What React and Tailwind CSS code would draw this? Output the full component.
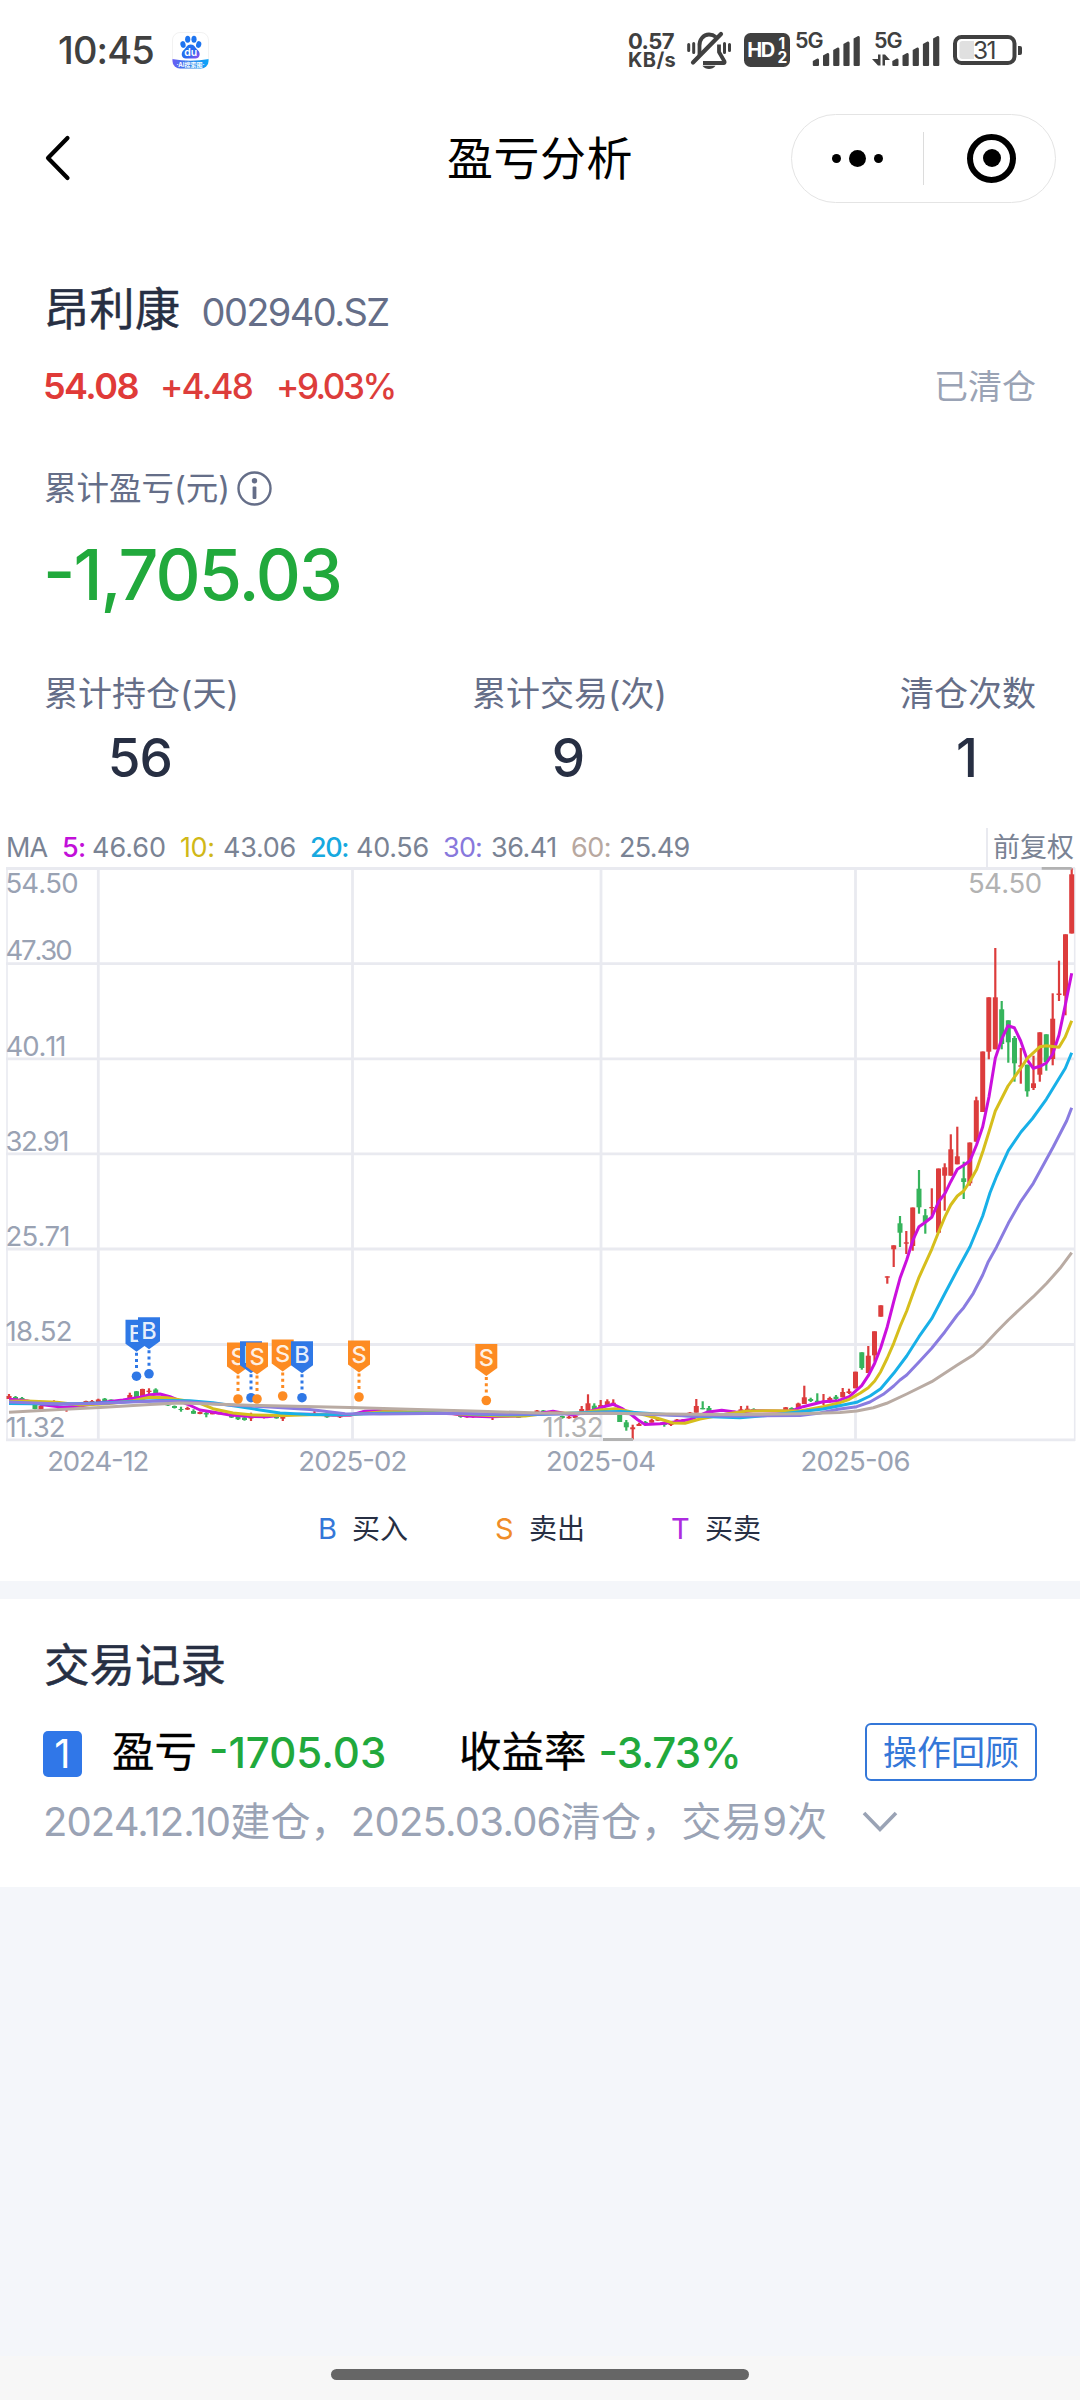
import React from "react";

const GRID_Y = [868.5, 963.7, 1058.8, 1153.8, 1249, 1344.5, 1439.8];
const GRID_X = [98.3, 352.5, 601, 855.5];

const PRICE_LABELS = [
  ["54.50", 893, 73],
  ["47.30", 960, 67],
  ["40.11", 1055.5, 61],
  ["32.91", 1150.5, 64],
  ["25.71", 1245.5, 65],
  ["18.52", 1341, 67],
  ["11.32", 1436.7, 60],
];

const DATE_LABELS = [
  ["2024", "12", 98.3, 102],
  ["2025", "02", 352.8, 109],
  ["2025", "04", 601, 110],
  ["2025", "06", 855.5, 110],
];

// direction, x, high, body top, body bottom, low
const CANDLES = [
  ["r", 9, 1394, 1396, 1399, 1399], ["g", 15.5, 1396, 1397, 1399, 1399], ["g", 22, 1397, 1398, 1400, 1400],
  ["g", 35, 1404.7, 1405, 1409, 1409.3], ["r", 41, 1405, 1406, 1409.3, 1410], ["r", 54, 1400.3, 1401, 1403, 1403],
  ["g", 60, 1406, 1407, 1410, 1411], ["r", 66.5, 1406, 1408, 1410, 1411.7], ["r", 86, 1400.7, 1401, 1403, 1403],
  ["r", 92, 1400, 1401, 1403, 1403], ["r", 98.3, 1398.7, 1399.5, 1402, 1402.7], ["g", 104.7, 1398, 1398.7, 1401, 1401.3],
  ["g", 111, 1399.5, 1399.5, 1401, 1401], ["r", 117, 1400, 1400, 1401.5, 1401.5],
  ["r", 129.8, 1392.7, 1395, 1399.3, 1400], ["g", 136.5, 1391, 1391.3, 1397, 1397], ["r", 142.5, 1388.7, 1389, 1396, 1397],
  ["r", 149, 1388.3, 1390.7, 1392, 1394], ["g", 155.7, 1388.3, 1389.5, 1393.3, 1393.5],
  ["g", 168, 1402, 1403.5, 1405.5, 1406], ["g", 174.5, 1405.5, 1406, 1408, 1408.5], ["g", 181, 1406.7, 1409, 1410, 1411.7],
  ["r", 187.5, 1406.7, 1408, 1409.5, 1410], ["g", 193.5, 1409.3, 1411, 1413.7, 1414], ["r", 200, 1411.5, 1412, 1414, 1414.2],
  ["g", 206.3, 1411.7, 1413, 1414.5, 1417.3], ["r", 212.5, 1412, 1412.7, 1414.3, 1414.3], ["r", 219, 1412, 1412.7, 1414.3, 1414.3],
  ["g", 231.5, 1414, 1415, 1417.5, 1418], ["g", 238, 1416, 1416.5, 1419.3, 1420], ["g", 244.5, 1416.7, 1417.5, 1420, 1420.7],
  ["r", 251, 1412.7, 1416.7, 1418.5, 1421], ["r", 264, 1415, 1416, 1418, 1418.5], ["g", 276.5, 1416.7, 1417, 1418.3, 1418.7],
  ["r", 282.8, 1416.7, 1417, 1418.7, 1421], ["r", 314.5, 1410.7, 1413, 1414, 1414], ["g", 327, 1415, 1415.5, 1417.3, 1417.7],
  ["r", 340, 1415, 1415.5, 1417.3, 1418], ["r", 365, 1410, 1410.5, 1412, 1412], ["r", 371, 1410, 1410.5, 1412, 1412],
  ["g", 460.7, 1413.7, 1415, 1417, 1417.7], ["r", 467, 1415, 1416, 1417.3, 1417.7], ["r", 473, 1415, 1416, 1417.3, 1417.7],
  ["r", 486, 1416, 1416.3, 1418, 1418], ["r", 492.5, 1416.3, 1416.7, 1418, 1420], ["g", 518.5, 1415, 1416, 1417.7, 1418],
  ["r", 524, 1415, 1415.5, 1417, 1417], ["r", 537, 1410, 1410.5, 1412, 1412], ["g", 543.3, 1410, 1410.5, 1412, 1412],
  ["g", 562.3, 1415.7, 1416, 1418, 1418.7], ["r", 569, 1416, 1416.7, 1418.3, 1418.7], ["r", 575.3, 1415.7, 1416, 1418, 1418.3],
  ["r", 581.7, 1406, 1409, 1411.7, 1412], ["r", 588, 1394.3, 1403.3, 1410.7, 1411], ["g", 594.3, 1403.3, 1405.7, 1410, 1410],
  ["r", 600.7, 1400, 1405, 1409.3, 1409.3], ["r", 607.3, 1399.3, 1401.3, 1405.3, 1406], ["r", 613.3, 1399.3, 1402.7, 1405.3, 1406],
  ["g", 619.7, 1414, 1414, 1422, 1422], ["g", 626.3, 1420, 1422.3, 1427.3, 1430.7], ["r", 632.7, 1424.7, 1427.3, 1429.3, 1439.5],
  ["r", 639, 1422.7, 1424, 1426, 1426], ["g", 645.3, 1421, 1422, 1424, 1424], ["r", 651.7, 1418.7, 1420, 1422.7, 1422.7],
  ["r", 658, 1418.3, 1419, 1420.7, 1420.7], ["g", 664.3, 1422, 1423.5, 1425, 1426.7], ["r", 671, 1423, 1423.5, 1425, 1426],
  ["r", 677, 1419, 1419.5, 1421, 1421], ["r", 683.3, 1419, 1419.5, 1421, 1421], ["r", 690, 1412, 1412.5, 1414, 1414],
  ["r", 696.3, 1399, 1406, 1412.7, 1412.7], ["g", 702.7, 1401.3, 1408, 1409.3, 1409.3], ["g", 709, 1406, 1408, 1411.3, 1411.7],
  ["r", 734.3, 1410.7, 1411, 1412, 1412], ["r", 741, 1406, 1409.3, 1412, 1412], ["r", 747.3, 1405.7, 1408.7, 1411.3, 1411.3],
  ["g", 753.7, 1408.3, 1409, 1411, 1411], ["r", 760, 1410, 1410.5, 1412, 1412], ["r", 766.5, 1410, 1410.5, 1412, 1412],
  ["r", 785.7, 1407, 1407.3, 1410.7, 1411], ["g", 791.7, 1407.3, 1408, 1410, 1410], ["r", 798.3, 1402.7, 1403.5, 1408.7, 1408.7],
  ["r", 804.3, 1385.7, 1397.3, 1404, 1404], ["g", 810.7, 1397.7, 1399, 1401, 1402], ["g", 817.3, 1393.3, 1400.7, 1402, 1402.3],
  ["r", 823.5, 1394, 1401, 1402, 1405], ["r", 829.8, 1396.7, 1398, 1401.5, 1402.7], ["g", 836, 1395, 1396.7, 1399, 1400],
  ["r", 842.7, 1388, 1392, 1397.3, 1397.5], ["r", 849, 1388.7, 1391.3, 1393, 1394],
  ["r", 855.5, 1371.7, 1371.7, 1388.3, 1388.3], ["g", 861.8, 1352.3, 1352.3, 1368, 1369.7], ["r", 868.3, 1346, 1355.7, 1373, 1373],
  ["r", 874.5, 1331.3, 1331.3, 1355.3, 1361.7], ["r", 880.8, 1305.3, 1305.3, 1316.7, 1316.7], ["r", 887.3, 1276.3, 1276.3, 1277.7, 1283.7],
  ["r", 893.7, 1245.3, 1245.3, 1249.3, 1267], ["g", 900, 1216, 1223.3, 1232.7, 1247], ["r", 906.3, 1231, 1242.3, 1243.7, 1254],
  ["r", 912.7, 1207.5, 1207.5, 1246, 1250.7], ["g", 919, 1170, 1188.7, 1207.3, 1213.7], ["g", 925.3, 1209, 1215.3, 1222, 1233.7],
  ["r", 931.8, 1188.3, 1207, 1208.3, 1216.7], ["r", 938.5, 1168.5, 1168.5, 1232.7, 1232.7], ["r", 944.7, 1163.3, 1167.3, 1175.7, 1210.7],
  ["r", 950.8, 1134.3, 1149.3, 1175.7, 1175.7], ["r", 957.3, 1126.7, 1156.3, 1164.3, 1164.3], ["g", 963.7, 1161.7, 1178.3, 1182, 1199],
  ["r", 969.8, 1142.5, 1142.5, 1183.3, 1185.7], ["r", 976.3, 1096.7, 1100.3, 1141.7, 1141.7], ["r", 982.7, 1051.5, 1051.5, 1112, 1112],
  ["r", 988.8, 997.3, 997.3, 1051.7, 1059.3], ["r", 995.3, 948, 997.3, 1049.3, 1049.3], ["g", 1001.7, 1001, 1009.3, 1044, 1049.3],
  ["g", 1008.3, 1020.3, 1020.3, 1042.3, 1062.7], ["g", 1014.5, 1036, 1038, 1063.3, 1081.7], ["r", 1020.8, 1048, 1065.3, 1066.7, 1083.7],
  ["g", 1027.3, 1064.7, 1064.7, 1091.3, 1096.7], ["r", 1033.5, 1055.7, 1083.3, 1088, 1090], ["r", 1039.8, 1032.3, 1032.3, 1074.7, 1081.7],
  ["g", 1046.3, 1034.3, 1034.3, 1062, 1070.7], ["r", 1052.7, 993.3, 1018.7, 1059, 1065.3], ["r", 1059, 960.7, 993.5, 995, 1001],
  ["r", 1065.5, 934.3, 934.3, 995.7, 1015.3], ["r", 1071.7, 868.3, 874.3, 933.5, 933.5],
];

const MA_LINES = [
  ["#cb10dd", "9,1399.3 26.7,1400.7 43,1404.7 63,1407.3 80,1406 100,1402.7 123,1400 140,1397.3 150,1394.7 160,1394 170,1396.7 187,1404 200,1410 217,1412.7 230,1415 247,1416.3 267,1416.7 283,1415 300,1414.3 317,1414.3 333,1415.3 350,1415.3 365,1411.3 383,1410.3 407,1412 453,1413.7 467,1416 490,1416.7 520,1416 540,1413.3 553,1411.3 573,1415 590,1411.3 601.7,1407.3 613.3,1404.3 621.7,1408.3 631.7,1415 638,1420 645,1424.5 660,1423.7 676.7,1421.7 690,1419.5 706.7,1412.3 721.7,1410.3 736.7,1412.3 753,1410.7 773,1411 790,1411.3 803,1406.7 823,1401.7 838.3,1400.7 849.3,1396.7 861.7,1385.7 868.3,1375.7 874.7,1363.3 880.7,1347.7 887.3,1326.7 893.7,1301.7 900,1278.3 906.7,1260 912.7,1240.7 919,1226.7 925.3,1222.3 931.7,1217.3 938.7,1201.7 945,1193.3 950.7,1181.7 957.3,1169.3 963.7,1165.3 970,1160.7 976.5,1145 982.7,1126.7 989,1096.7 995.3,1058.3 1001.7,1039 1008,1025.7 1014.3,1027.7 1020.7,1041 1027.3,1060 1033.3,1068.3 1040,1066.3 1046.3,1063 1052.7,1054 1059,1035 1065.3,1005 1071.7,973.3"],
  ["#d6be1c", "9,1401.3 27,1401 57,1402.3 80,1405 107,1403.7 133,1400.7 150,1397.3 167,1397.7 187,1401 200,1403.3 213,1408.7 233,1413 253,1415 283,1415.5 310,1414.7 350,1414.7 383,1411.7 420,1411.7 460,1414 500,1416 525,1416 550,1413 580,1413.3 600,1410 615,1408.7 627,1411 645,1415 660,1419 673,1423 685,1423.3 700,1419 717,1415.7 733,1413 747,1411 773,1410.7 800,1411 823,1406.7 840,1402.7 849.3,1399.3 860,1393.3 868.3,1387.7 874.7,1381 880.7,1371.7 887.3,1358 893.7,1343.3 900,1326.7 906.7,1311 912.7,1294.3 919,1277.3 931.7,1249.3 938.7,1231.7 945,1216.7 950.7,1205 957.3,1196 963.7,1191 970,1181.3 976.7,1169.3 983,1151 989,1131.7 995.3,1111 1008,1086 1020.7,1068.3 1027.3,1058.3 1040,1046.7 1046.3,1045.7 1059,1047.3 1065.3,1036.7 1071.7,1020.7"],
  ["#18b0e8", "9,1403.5 60,1404 100,1403 133,1401.5 160,1400.5 190,1400.7 213,1402.7 240,1406.7 260,1410 280,1413 310,1414.5 340,1414.7 380,1413.3 440,1413 500,1414.7 540,1414.5 600,1412 620,1411.5 650,1413.5 690,1416 740,1417.7 770,1415.3 800,1411.7 823,1409 838.3,1406 856.7,1402.3 870,1396 880.7,1388.7 893.7,1373.3 906.7,1356 919,1336.7 931.7,1318.7 945,1293.3 957.3,1270 970,1246.7 982.7,1216 990,1192.7 996.7,1176 1008.3,1150.7 1021,1132 1032.5,1118.5 1046.3,1099.3 1065.3,1068.3 1071.7,1052.7"],
  ["#8a7ce0", "9,1402 60,1404 100,1403.5 130,1402 160,1401 190,1402 230,1405 270,1407 310,1409.5 345,1413.7 380,1414 450,1413.3 500,1414.3 560,1414 610,1413 640,1414 690,1416 740,1416 800,1415.5 820,1413 838,1409.3 856.7,1406.7 870,1402 883.3,1394.3 893.7,1386 900,1380 906.7,1375 919,1362 931.7,1348.3 945,1331.7 957.3,1315 963.7,1307.7 973.3,1293.3 982.7,1275 988.3,1261.7 996.7,1246.7 1008.3,1223.3 1020,1202.7 1033.3,1183.3 1053.3,1146.7 1066.7,1120.7 1071.7,1107.7"],
  ["#b9aba3", "9,1412.3 60,1409.5 100,1407.5 150,1404.5 180,1403 220,1404.3 260,1405.5 350,1407.5 400,1409 480,1411.3 540,1413 600,1413.3 690,1414.3 740,1414.5 800,1413.7 840,1412.5 856.7,1411 873.3,1407.7 886.7,1403.3 906.7,1394 931.7,1381.7 957.3,1365 973.3,1355 982.7,1346.7 996.7,1331.7 1008.3,1320 1020,1309 1033.3,1296.7 1046.7,1283.3 1060,1268.3 1071.7,1252.7"],
];

const MARKERS = [
  ["B", 136.5, 1319.7], ["B", 149, 1317.3], ["S", 238, 1342.5], ["B", 251, 1341.2], ["S", 257, 1342.5],
  ["S", 282.7, 1339.5], ["B", 302, 1341.2], ["S", 359, 1340.5], ["S", 486.3, 1344],
];

const BLUE = "#2f78e6";
const ORANGE = "#fd8b22";

function Marker({ type, x, y }) {
  const c = type === "B" ? BLUE : ORANGE;
  return (
    <g>
      <path d={`M${x - 11} ${y}h22v24l-11 8l-11 -8z`} fill={c} />
      <text x={x} y={y + 22} textAnchor="middle" fontSize="23.500" fontWeight="500" fill="#fff" fillOpacity="0.88">{type}</text>
      <path d={`M${x} ${y + 33}v16`} stroke={c} strokeWidth="3" strokeDasharray="3 3.2" />
      <circle cx={x} cy={y + 56.5} r="4.8" fill={c} />
    </g>
  );
}

function Chart() {
  return (
    <svg width="1080" height="620" viewBox="0 868 1080 620" className="block overflow-visible">
      <g stroke="#e9eaf0" strokeWidth="2.8">
        {GRID_Y.map((y) => <path key={y} d={`M6 ${y}H1075`} />)}
        {GRID_X.map((x) => <path key={x} d={`M${x} 868V1441`} />)}
      </g>
      <path d="M7 868V1441M1074.700 868V1441" stroke="#e9eaf0" strokeWidth="1.600" />
      <g fontSize="27.500" fill="#99a2b3" className="[font-kerning:none]">
        {PRICE_LABELS.map(([t, y, w]) => <text key={t} x="5.500" y={y} textLength={w} lengthAdjust="spacing">{t}</text>)}
        {DATE_LABELS.map(([a, b, x, w]) => (
          <text key={x} x={x - w / 2} y="1471" textLength={w} lengthAdjust="spacing">{a}<tspan dy="-1">-</tspan><tspan dy="1">{b}</tspan></text>
        ))}
      </g>
      {CANDLES.map(([d, x, h, t, b, l]) => {
        const c = d === "r" ? "#dc3c3c" : "#36b45c";
        return (
          <g key={x} fill={c}>
            <rect x={x - 1.1} y={h} width="2.2" height={l - h} />
            <rect x={x - 2.5} y={t} width="5" height={b - t} />
          </g>
        );
      })}
      {MA_LINES.map(([c, p]) => <polyline key={c} points={p} fill="none" stroke={c} strokeWidth="3" strokeLinejoin="round" />)}
      <path d="M1041.700 868.300h30M603 1439.500h30" stroke="#b2b2b2" strokeWidth="2.800" />
      <g fontSize="27.500" fill="#b2b2b2" className="[font-kerning:none]">
        <text x="968" y="893" textLength="74" lengthAdjust="spacing">54.50</text>
        <text x="542.500" y="1437" textLength="61" lengthAdjust="spacing">11.32</text>
      </g>
      {MARKERS.map(([t, x, y]) => <Marker key={x} type={t} x={x} y={y} />)}
    </svg>
  );
}

function BaiduIcon() {
  return (
    <svg width="37" height="37" viewBox="0 0 37 37">
      <defs>
        <linearGradient id="band" x1="0" x2="1"><stop offset="0" stopColor="#6a5cf5" /><stop offset=".5" stopColor="#2f86ea" /><stop offset="1" stopColor="#08a5fb" /></linearGradient>
        <linearGradient id="paw" x1="0" y1="0" x2="1" y2="1"><stop offset="0" stopColor="#1d7af2" /><stop offset=".6" stopColor="#2a68ee" /><stop offset="1" stopColor="#a050f0" /></linearGradient>
        <clipPath id="round"><rect x=".5" y=".5" width="36" height="36" rx="7.5" /></clipPath>
      </defs>
      <rect x=".5" y=".5" width="36" height="36" rx="7.5" fill="#fff" stroke="#f2f2f2" />
      <path clipPath="url(#round)" d="M0 27Q18.500 30.500 37 27V37H0z" fill="url(#band)" />
      <g fill="#1d74f0">
        <ellipse cx="11" cy="12.500" rx="2.600" ry="3.400" transform="rotate(-12 11 12.500)" />
        <ellipse cx="15.700" cy="7.300" rx="2.600" ry="3.500" />
        <ellipse cx="22" cy="7.300" rx="2.600" ry="3.500" />
        <ellipse cx="26.700" cy="12.500" rx="2.600" ry="3.400" transform="rotate(12 26.700 12.500)" />
      </g>
      <path d="M18.700 12.500c4 0 4.500 3.500 7 5.500 3.500 3.300 2 8.500-2.200 8.500h-9.600c-4.200 0-5.700-5.200-2.200-8.500 2.500-2 3-5.500 7-5.500z" fill="url(#paw)" />
      <text x="18.700" y="24.300" textAnchor="middle" fontSize="10.500" fontWeight="600" fill="#fff">du</text>
      <text x="18.500" y="35" textAnchor="middle" fontSize="6" fontWeight="700" fill="#fff">·AI搜索图·</text>
    </svg>
  );
}

function BellOff() {
  return (
    <svg width="44" height="40" viewBox="687 30 44 40" fill="none" stroke="#404040" strokeWidth="3.500" strokeLinecap="round">
      <path d="M699.500 55V46a9.500 10.500 0 0 1 9.500 -11.500c3 0 5 .8 6.700 2.300" strokeLinecap="butt" strokeWidth="3.800" />
      <path d="M719 44.500V52l5.500 9.500c.4 1 0 1.500-1 1.500H703" strokeLinecap="butt" strokeWidth="3.800" strokeLinejoin="round" />
      <path d="M693 62.500L721 34" strokeWidth="4.200" />
      <path d="M702.500 65.800h13c-3 4.400-10 4.400-13 0z" fill="#404040" stroke="none" />
      <path d="M688.700 44.500v6M693.700 43.500v9M724.500 43.500v9M729.500 44.500v6" strokeWidth="3" />
    </svg>
  );
}

function HdBadge() {
  return (
    <svg width="46" height="40" viewBox="744 30 46 40" fontWeight="700" fill="#fff">
      <rect x="744" y="33" width="46" height="34" rx="6.500" fill="#404040" />
      <text x="747.300" y="57.300" fontSize="20" textLength="28" lengthAdjust="spacing">HD</text>
      <text x="778.500" y="48.500" fontSize="15.500">1</text>
      <text x="777.500" y="63" fontSize="15.500">2</text>
    </svg>
  );
}

function Signal({ arrows = false }) {
  const off = arrows ? 892.3 : 812.8;
  const textX = arrows ? 874 : 795;
  return (
    <svg width={arrows ? 68 : 67} height="52" viewBox={arrows ? "872 24 68 52" : "794 24 67 52"} fill="#404040">
      <text x={textX} y="48.300" fontSize="21.500" fontWeight="600" textLength="28.500" lengthAdjust="spacing">5G</text>
      {[59, 53.5, 48, 42, 36.5].map((t, i) => (
        <path key={t} d={`M${off + i * 10.2} ${t + 2}l4.500 -2.500q1.700 -.4 1.700 1.500V65q0 1 -1 1h-4.200q-1 0 -1 -1z`} />
      ))}
      {arrows && <path d="M878 54.500h2.500v11h-2.500l-6 -6.500h6zM882.500 54.500h2.500l5 5.500h-5v5.500h-2.500z" />}
    </svg>
  );
}

function Battery() {
  return (
    <svg width="70" height="40" viewBox="953 30 70 40">
      <rect x="955" y="37" width="59.500" height="26" rx="6.500" fill="none" stroke="#404040" strokeWidth="4" />
      <path d="M962.500 41H974v18h-11.500q-3 0 -3 -3V44q0 -3 3 -3z" fill="#e0e0e0" />
      <path d="M1018 46h2q2 0 2 2v5q0 2 -2 2h-2z" fill="#404040" />
      <text x="984.700" y="58.800" textAnchor="middle" fontSize="24.500" fill="#404040" textLength="23.500" lengthAdjust="spacing">31</text>
    </svg>
  );
}

function StatusBar() {
  return (
    <div className="flex h-[100px] items-center pl-[58px] text-[#404040]">
      <span className="w-[114px] text-[38px] font-medium tracking-[-0.85px]">10:45</span>
      <BaiduIcon />
      <div className="ml-[419px] flex w-[49px] flex-col font-bold">
        <span className="h-[20px] text-[22px] leading-[20px] tracking-[-0.6px]">0.57</span>
        <span className="h-[19px] text-[20px] leading-[19px] tracking-[0.4px]">KB/s</span>
      </div>
      <div className="ml-[10px]"><BellOff /></div>
      <div className="ml-[13px]"><HdBadge /></div>
      <div className="ml-[4px]"><Signal /></div>
      <div className="ml-[11px]"><Signal arrows /></div>
      <div className="ml-[13px]"><Battery /></div>
    </div>
  );
}

function NavBar() {
  return (
    <div className="flex h-[116px] items-center">
      <svg width="28" height="50" viewBox="44 133.500 28 50" className="ml-[44px]">
        <path d="M67.500 138.500L48 158.500L67.500 178.500" fill="none" stroke="#000" strokeWidth="4.200" strokeLinecap="round" strokeLinejoin="round" />
      </svg>
      <h1 className="ml-[375px] w-[188px] whitespace-nowrap text-[46px] tracking-[0.5px]">盈亏分析</h1>
      <div className="ml-[156px] flex h-[89px] w-[265px] items-center rounded-full border border-[#e4e4e4]">
        <div className="flex w-[131px] items-center justify-center gap-[8px]">
          <i className="size-[9px] rounded-full bg-black" />
          <i className="size-[17px] rounded-full bg-black" />
          <i className="size-[9px] rounded-full bg-black" />
        </div>
        <div className="h-[53px] w-px bg-[#dcdcdc]" />
        <div className="flex flex-1 justify-center pl-[4px]">
          <div className="flex size-[49px] items-center justify-center rounded-full border-[6px] border-black">
            <i className="size-[18px] rounded-full bg-black" />
          </div>
        </div>
      </div>
    </div>
  );
}

function Stat({ label, value }) {
  return (
    <div className="flex flex-col items-center">
      <span className="h-[40px] text-[34px] leading-[40px] text-[#656e88]">{label}</span>
      <span className="mt-[14px] h-[60px] pr-[3px] text-[53px] font-medium leading-[60px] tracking-[-1px] text-[#272f43]">{value}</span>
    </div>
  );
}

function Legend({ letter, color, label, className }) {
  return (
    <div className={"flex items-center " + className}>
      <span className={"w-[34px] text-[29px] " + color}>{letter}</span>
      <span className="text-[28px] text-[#272f43]">{label}</span>
    </div>
  );
}

export default function App() {
  return (
    <div className="flex h-[2400px] w-[1080px] flex-col overflow-hidden bg-[#f4f6fa] whitespace-nowrap font-[Inter,'Noto_Sans_CJK_SC',sans-serif] text-black">
      <div className="h-[1581px] bg-white">
        <StatusBar />
        <NavBar />
        <div className="px-[43px]">
          <div className="mt-[64px] flex h-[60px] leading-[60px]">
            <span className="pl-px text-[45px] tracking-[0.5px] text-[#272f43] [-webkit-text-stroke:0.5px_#272f43]">昂利康</span>
            <span className="ml-[21px] pt-[2px] text-[38px] tracking-[-1.6px] text-[#656e88]">002940.SZ</span>
          </div>
          <div className="mt-[26px] flex h-[40px] items-center justify-between">
            <div className="flex items-center text-[35px] font-medium leading-[40px] text-[#dd3d3b]">
              <span className="w-[117px] text-[36px] font-semibold tracking-[-1.54px] text-[#e03a38]">54.08</span>
              <span className="w-[116px] tracking-[-1.75px]">+4.48</span>
              <span className="tracking-[-2.45px]">+9.03%</span>
            </div>
            <span className="pr-px text-[34px] text-[#9aa3b5]">已清仓</span>
          </div>
          <div className="mt-[63px] flex h-[40px] items-center pl-px text-[32.500px] leading-[40px] text-[#656e88]">
            <span className="w-[193px]">累计盈亏(元)</span>
            <svg width="35" height="36" viewBox="0 0 35 36" fill="#656e88">
              <circle cx="17.500" cy="17.500" r="16" fill="none" stroke="#656e88" strokeWidth="2.400" />
              <circle cx="17.500" cy="9.800" r="2.700" />
              <rect x="15.600" y="15.500" width="3.800" height="12.500" rx="1" />
            </svg>
          </div>
          <div className="mt-[26px] h-[80px] text-[70px] font-medium leading-[80px] tracking-[-1.93px] text-[#21a93c]"><span className="relative -top-[4px]">-</span>1,705.03</div>
          <div className="mt-[59px] flex justify-between pl-px pr-px">
            <Stat label="累计持仓(天)" value="56" />
            <Stat label="累计交易(次)" value="9" />
            <Stat label="清仓次数" value="1" />
          </div>
        </div>
        <div className="mt-[40px] flex h-[40px] items-center justify-between pl-[6px] pr-[6px] text-[27px] text-[#7a8394]">
          <div className="grid grid-cols-[56px_30px_88px_43px_87px_46px_87px_48px_80px_48px_80px] pt-px">
            <span className="tracking-[-1px]">MA</span>
            <span className="font-medium tracking-[-0.6px] text-[#c20fd9]">5:</span>
            <span>46.60</span>
            <span className="tracking-[-0.4px] text-[#d0b818]">10:</span>
            <span className="tracking-[-0.3px]">43.06</span>
            <span className="font-medium tracking-[-1.4px] text-[#17a9e0]">20:</span>
            <span className="tracking-[-0.3px]">40.56</span>
            <span className="tracking-[-0.8px] text-[#8878dc]">30:</span>
            <span className="tracking-[-0.5px]">36.41</span>
            <span className="tracking-[-0.5px] text-[#b8a8a0]">60:</span>
            <span className="tracking-[-0.7px]">25.49</span>
          </div>
          <div className="flex h-[40px] items-center border-l-2 border-[#e9eaf0] pl-[5px]">前复权</div>
        </div>
        <Chart />
        <div className="mt-[21px] flex h-[40px] items-center pl-[318px]">
          <Legend letter="B" color="text-[#3477d8]" label="买入" className="w-[177px]" />
          <Legend letter="S" color="text-[#f08c28]" label="卖出" className="w-[176px]" />
          <Legend letter="T" color="text-[#ad2be0]" label="买卖" className="" />
        </div>
      </div>

      <div className="mt-[18px] h-[288px] bg-white px-[43px] pt-[42px]">
        <h2 className="h-[50px] pl-px text-[45.500px] leading-[50px] text-[#272f43] [-webkit-text-stroke:0.5px_#272f43]">交易记录</h2>
        <div className="mt-[32px] flex h-[58px] items-center text-[42.500px]">
          <span className="mt-[3px] flex h-[46px] w-[39px] items-center justify-center rounded-[5px] bg-[#3077e8] text-[40px] text-white">1</span>
          <span className="ml-[30px] [-webkit-text-stroke:0.3px_#000]">盈亏</span>
          <span className="ml-[12px] w-[192px] text-[42px] font-medium text-[#21a93c]"><span className="relative -top-[2px]">-</span>1705.03</span>
          <span className="ml-[58px] [-webkit-text-stroke:0.3px_#000]">收益率</span>
          <span className="ml-[12px] text-[42px] font-medium tracking-[-0.9px] text-[#21a93c]"><span className="relative -top-[2px]">-</span>3.73%</span>
          <span className="ml-auto flex h-[58px] w-[172px] items-center justify-center rounded-[6px] border-2 border-[#3477d8] text-[34px] text-[#3477d8]">操作回顾</span>
        </div>
        <div className="mt-[16px] flex h-[50px] items-center text-[40px] leading-[50px] text-[#9aa3b5]">
          <span className="tracking-[-0.9px]">2024.12.10</span>
          <span className="tracking-[0.2px]">建仓，</span>
          <span className="tracking-[-0.75px]">2025.03.06</span>
          <span className="tracking-[0.3px]">清仓，交易9次</span>
          <svg width="36" height="22" viewBox="0 0 36 22" className="ml-[34px]">
            <path d="M2 2L18 18.500L34 2" fill="none" stroke="#9aa3b5" strokeWidth="3.600" />
          </svg>
        </div>
      </div>

      <div className="mt-auto flex h-[44px] justify-center bg-[#f7f7f7] pt-[13px]">
        <div className="h-[11px] w-[418px] rounded-full bg-[#666]" />
      </div>
    </div>
  );
}
